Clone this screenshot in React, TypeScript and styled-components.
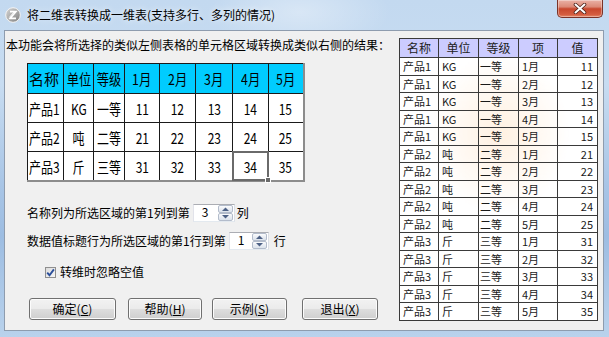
import React from "react";
import styled, { createGlobalStyle } from "styled-components";

const GlobalStyle = createGlobalStyle`
  html, body {
    margin: 0;
    padding: 0;
  }
  body {
    width: 609px;
    height: 337px;
    overflow: hidden;
    font-family: "Noto Sans CJK SC", "Liberation Sans", sans-serif;
    color: #000;
  }
`;

const leftCols = [36, 30, 31, 35, 36, 37, 36, 35];
const leftHead = ["名称", "单位", "等级", "1月", "2月", "3月", "4月", "5月"];
const products: [string, string, string, number][] = [
  ["产品1", "KG", "一等", 1],
  ["产品2", "吨", "二等", 2],
  ["产品3", "斤", "三等", 3],
];

const rightCols = [39, 40, 40, 39, 40];
const rightHead = ["名称", "单位", "等级", "项", "值"];
const resultRows = products.flatMap(([name, unit, grade, n]) =>
  [1, 2, 3, 4, 5].map((m) => ({
    name,
    unit,
    grade,
    item: `${m}月`,
    value: n * 10 + m,
  }))
);

const AppIcon = () => (
  <svg width="16" height="16" viewBox="0 0 16 16">
    <defs>
      <linearGradient id="ig" x1="0" y1="0" x2="1" y2="1">
        <stop offset="0" stopColor="#d8d8d8" />
        <stop offset="1" stopColor="#7d7d7d" />
      </linearGradient>
    </defs>
    <circle cx="8" cy="8" r="7.3" fill="url(#ig)" stroke="#f4f4f4" strokeWidth="1" />
    <path d="M5 4.6h6L5 11.4h6" fill="none" stroke="#fff" strokeWidth="1.6" />
    <path d="M9.4 4.6L4.4 10.4" stroke="#fff" strokeWidth="1" />
  </svg>
);

const CloseGlyph = () => (
  <svg width="14" height="11" viewBox="0 0 14 11">
    <path
      d="M2.5 1.5L11.5 9.5M11.5 1.5L2.5 9.5"
      stroke="#4b2018"
      strokeWidth="3.6"
      strokeLinecap="round"
    />
    <path
      d="M2.5 1.5L11.5 9.5M11.5 1.5L2.5 9.5"
      stroke="#fff"
      strokeWidth="2"
      strokeLinecap="round"
    />
  </svg>
);

const SpinArrowIcon = ({ up }: { up?: boolean }) => (
  <svg width="7" height="4" viewBox="0 0 7 4">
    <path d={up ? "M0 4L3.5 0.5L7 4Z" : "M0 0L3.5 3.5L7 0Z"} fill="#4d6185" />
  </svg>
);

const CheckMark = () => (
  <svg width="9" height="9" viewBox="0 0 9 9">
    <path
      d="M1.2 4.6L3.5 7.2L7.9 1.4"
      fill="none"
      stroke="#2b4f9a"
      strokeWidth="1.9"
    />
  </svg>
);

const Spinner = ({ value, width }: { value: number; width: number }) => (
  <SpinBox $w={width}>
    <SpinValue>{value}</SpinValue>
    <SpinButtons>
      <SpinArrow>
        <SpinArrowIcon up />
      </SpinArrow>
      <SpinArrow>
        <SpinArrowIcon />
      </SpinArrow>
    </SpinButtons>
  </SpinBox>
);

export default function App() {
  return (
    <>
      <GlobalStyle />
      <Window>
        <TitleBar>
          <TitleLeft>
            <AppIcon />
            <TitleText>将二维表转换成一维表(支持多行、多列的情况)</TitleText>
          </TitleLeft>
          <CloseButton>
            <CloseGlyph />
          </CloseButton>
        </TitleBar>
        <Client>
          <LeftPane>
            <Intro>本功能会将所选择的类似左侧表格的单元格区域转换成类似右侧的结果：</Intro>
            <SourceTable>
              <colgroup>
                {leftCols.map((w, i) => (
                  <col key={i} style={{ width: w }} />
                ))}
              </colgroup>
              <thead>
                <tr>
                  {leftHead.map((h, i) => (
                    <SourceHead key={h} $first={i === 0}>
                      <Squeeze $first={i === 0} $scale={i === 0 ? 1 : 0.82}>
                        {h}
                      </Squeeze>
                    </SourceHead>
                  ))}
                </tr>
              </thead>
              <tbody>
                {products.map(([name, unit, grade, n]) => {
                  const cells = [name, unit, grade, ...[1, 2, 3, 4, 5].map((m) => String(n * 10 + m))];
                  return (
                    <tr key={name}>
                      {cells.map((c, i) => (
                        <SourceCell key={i} $first={i === 0} $selected={n === 3 && i === 6}>
                          <Squeeze $first={i === 0} $scale={0.8}>
                            {c}
                          </Squeeze>
                        </SourceCell>
                      ))}
                    </tr>
                  );
                })}
              </tbody>
            </SourceTable>

            <OptionRow $top={22}>
              名称列为所选区域的第1列到第
              <SpinSlot $left={3} $right={2}>
                <Spinner value={3} width={42} />
              </SpinSlot>
              列
            </OptionRow>
            <OptionRow $top={10}>
              数据值标题行为所选区域的第1行到第
              <SpinSlot $left={3} $right={5}>
                <Spinner value={1} width={40} />
              </SpinSlot>
              行
            </OptionRow>

            <CheckRow>
              <CheckBox>
                <CheckMark />
              </CheckBox>
              转维时忽略空值
            </CheckRow>

            <ButtonRow>
              <DialogButton $w={87}>
                确定(<u>C</u>)
              </DialogButton>
              <DialogButton $w={74} $gap={12}>
                帮助(<u>H</u>)
              </DialogButton>
              <DialogButton $w={75} $gap={10}>
                示例(<u>S</u>)
              </DialogButton>
              <DialogButton $w={76} $gap={15}>
                退出(<u>X</u>)
              </DialogButton>
            </ButtonRow>
          </LeftPane>

          <RightPane>
            <ResultTable>
              <colgroup>
                {rightCols.map((w, i) => (
                  <col key={i} style={{ width: w }} />
                ))}
              </colgroup>
              <thead>
                <tr>
                  {rightHead.map((h) => (
                    <ResultHead key={h}>{h}</ResultHead>
                  ))}
                </tr>
              </thead>
              <tbody>
                {resultRows.map((r, i) => (
                  <tr key={i}>
                    <ResultCell>{r.name}</ResultCell>
                    <ResultCell>{r.unit}</ResultCell>
                    <ResultCell $pad={1}>{r.grade}</ResultCell>
                    <ResultCell>{r.item}</ResultCell>
                    <ResultCell $right>{r.value}</ResultCell>
                  </tr>
                ))}
              </tbody>
            </ResultTable>
          </RightPane>
        </Client>
      </Window>
    </>
  );
}

const Window = styled.div`
  width: 609px;
  height: 337px;
  display: flex;
  flex-direction: column;
  box-sizing: border-box;
  background:
    radial-gradient(ellipse 90px 40px at 300px 12px, rgba(255, 255, 255, 0.35), transparent),
    linear-gradient(180deg, #c3d9f0 0%, #c7dcf1 25%, #a8c5e6 55%, #9dbde2 70%, #b9d2ec 100%);
`;

const TitleBar = styled.div`
  height: 30px;
  display: flex;
  align-items: flex-start;
  flex-shrink: 0;
`;

const TitleLeft = styled.div`
  display: flex;
  align-items: center;
  gap: 6px;
  padding: 7px 0 0 5px;
`;

const TitleText = styled.span`
  font-size: 12px;
  line-height: 16px;
  color: #000;
  text-shadow: 0 0 6px rgba(255, 255, 255, 0.9);
`;

const CloseButton = styled.div`
  margin-left: auto;
  margin-right: 6px;
  width: 46px;
  height: 18px;
  box-sizing: border-box;
  border: 1px solid #7a3328;
  border-top: none;
  border-radius: 0 0 5px 5px;
  background: linear-gradient(180deg, #eab1a5 0%, #dc8a77 40%, #c8472d 52%, #d45d40 85%, #e5886a 100%);
  box-shadow: inset 0 0 0 1px rgba(255, 255, 255, 0.35);
  display: flex;
  align-items: center;
  justify-content: center;
`;

const Client = styled.div`
  flex: 1;
  display: flex;
  margin: 0 5px 6px 4px;
  border: 1px solid #8e9cae;
  background: #f0f0f0;
  min-height: 0;
`;

const LeftPane = styled.div`
  width: 391px;
  flex-shrink: 0;
  padding-top: 7px;
  box-sizing: border-box;
`;

const Intro = styled.div`
  font-size: 12px;
  line-height: 14px;
  height: 14px;
  margin-left: 1px;
  white-space: nowrap;
`;

const SourceTable = styled.table`
  margin: 11px 0 0 22px;
  border-collapse: collapse;
  table-layout: fixed;
  width: 276px;
  background: #fff;
  border-right: 2px solid #8c8c8c;
  border-bottom: 2px solid #8c8c8c;
`;

const SourceHead = styled.th<{ $first?: boolean }>`
  height: 29px;
  padding: 0 0 0 ${(p) => (p.$first ? 1 : 0)}px;
  background: #00ccff;
  border: 1px solid #1a1a1a;
  font-weight: normal;
  font-size: 15px;
  line-height: 15px;
  text-align: ${(p) => (p.$first ? "left" : "center")};
  overflow: hidden;
  white-space: nowrap;
`;

const SourceCell = styled.td<{ $first?: boolean; $selected?: boolean }>`
  position: relative;
  height: 28px;
  padding: 0 0 0 ${(p) => (p.$first ? 1 : 0)}px;
  border: 1px solid #1a1a1a;
  font-size: 15px;
  line-height: 15px;
  text-align: ${(p) => (p.$first ? "left" : "center")};
  white-space: nowrap;
  overflow: visible;

  ${(p) =>
    p.$selected &&
    `
    &::after {
      content: "";
      position: absolute;
      inset: -1px;
      border: 2px solid #6a6a6a;
    }
    &::before {
      content: "";
      position: absolute;
      right: -3px;
      bottom: -3px;
      width: 4px;
      height: 4px;
      background: #6a6a6a;
      border: 1px solid #fff;
      z-index: 1;
    }
  `}
`;

const Squeeze = styled.span<{ $first?: boolean; $scale: number }>`
  display: inline-block;
  transform: scaleX(${(p) => p.$scale});
  transform-origin: ${(p) => (p.$first ? "left" : "center")} center;
`;

const OptionRow = styled.div<{ $top: number }>`
  display: flex;
  align-items: center;
  height: 18px;
  margin: ${(p) => p.$top}px 0 0 22px;
  font-size: 12px;
  line-height: 14px;
  white-space: nowrap;
`;

const SpinSlot = styled.div<{ $left: number; $right: number }>`
  margin: 0 ${(p) => p.$right}px 0 ${(p) => p.$left}px;
`;

const SpinBox = styled.div<{ $w: number }>`
  display: flex;
  width: ${(p) => p.$w}px;
  height: 18px;
  box-sizing: border-box;
  border: 1px solid #abadb3;
  border-left-color: #e2e3ea;
  border-right-color: #dbdfe6;
  border-bottom-color: #e3e9ef;
  background: #fff;
`;

const SpinValue = styled.span`
  flex: 1;
  padding: 1px 0 0 8px;
  font-size: 12px;
  line-height: 12px;
`;

const SpinButtons = styled.div`
  display: flex;
  flex-direction: column;
  width: 15px;
  margin: 0 1px 0 0;
`;

const SpinArrow = styled.div`
  flex: 1;
  display: flex;
  align-items: center;
  justify-content: center;
  border: 1px solid #b3bccb;
  border-radius: 2px;
  background: linear-gradient(180deg, #fbfcfd 0%, #e9edf3 50%, #dce3ec 100%);
`;

const CheckRow = styled.div`
  display: flex;
  align-items: center;
  gap: 4px;
  height: 14px;
  margin: 15px 0 0 40px;
  font-size: 12px;
  line-height: 14px;
`;

const CheckBox = styled.div`
  width: 11px;
  height: 11px;
  box-sizing: border-box;
  border: 1px solid #8f8f8f;
  background: linear-gradient(135deg, #dcdcdc 0%, #f6f6f6 100%);
  display: flex;
  align-items: center;
  justify-content: center;
`;

const ButtonRow = styled.div`
  display: flex;
  margin: 19px 0 0 24px;
`;

const DialogButton = styled.div<{ $w: number; $gap?: number }>`
  width: ${(p) => p.$w}px;
  height: 22px;
  margin-left: ${(p) => p.$gap ?? 0}px;
  box-sizing: border-box;
  border: 1px solid #707070;
  border-radius: 3px;
  background: linear-gradient(180deg, #f2f2f2 0%, #ebebeb 48%, #dddddd 52%, #cfcfcf 100%);
  box-shadow: inset 0 0 0 1px #fcfcfc;
  display: flex;
  align-items: center;
  justify-content: center;
  font-size: 12px;
  line-height: 14px;

  u {
    text-decoration-thickness: 1px;
    text-underline-offset: 1px;
  }
`;

const RightPane = styled.div`
  flex: 1;
  padding: 7px 0 0 3px;
  box-sizing: border-box;
`;

const ResultTable = styled.table`
  border-collapse: collapse;
  table-layout: fixed;
  width: 198px;
  background:
    radial-gradient(ellipse 70px 80px at 100px 95px, rgba(255, 214, 170, 0.35), transparent),
    #fff;
  border: 1px solid #3a3a3a;
`;

const ResultHead = styled.th`
  height: 18px;
  padding: 0;
  background: #ccccff;
  border: 1px solid #3a3a3a;
  font-weight: normal;
  font-size: 12px;
  line-height: 14px;
  color: #222;
  text-align: center;
`;

const ResultCell = styled.td<{ $right?: boolean; $pad?: number }>`
  height: 16.5px;
  padding: 0 ${(p) => (p.$right ? 4 : 0)}px 0 ${(p) => p.$pad ?? 3}px;
  border: 1px solid #3a3a3a;
  font-size: 11px;
  line-height: 12px;
  color: #1a1a1a;
  text-align: ${(p) => (p.$right ? "right" : "left")};
  white-space: nowrap;
  overflow: hidden;
`;
